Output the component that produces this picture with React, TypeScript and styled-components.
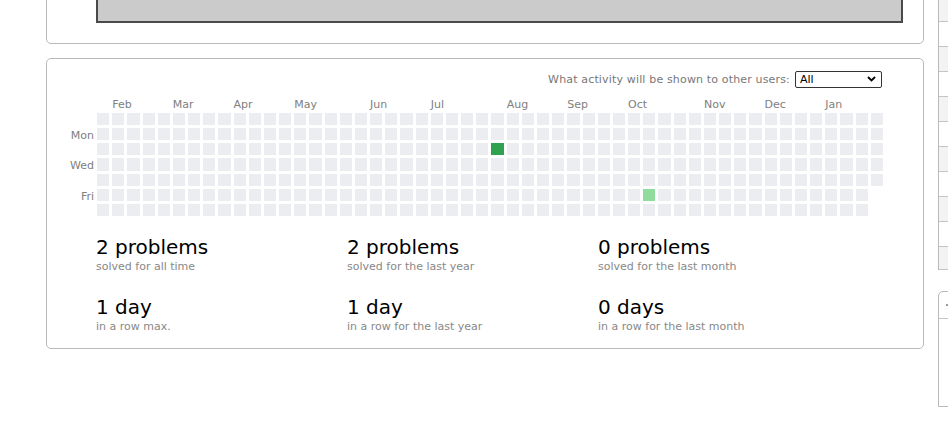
import React from "react";
import styled, { createGlobalStyle } from "styled-components";

const GlobalStyle = createGlobalStyle`
  html, body {
    margin: 0;
    padding: 0;
    background: #ffffff;
    overflow: hidden;
    font-family: "DejaVu Sans", Verdana, sans-serif;
  }
`;

const Page = styled.div`
  display: flex;
  align-items: flex-start;
  gap: 14px;
  padding-left: 46px;
  width: 1200px;
`;

const MainColumn = styled.div`
  width: 878px;
  flex: none;
  display: flex;
  flex-direction: column;
  gap: 14px;
`;

const RoundBox = styled.div`
  border: 1px solid #b9b9b9;
  border-radius: 5px;
  box-sizing: border-box;
`;

const TopBox = styled(RoundBox)`
  margin-top: -40px;
  padding: 19px 20px 20px 49px;
`;

const GrayBlock = styled.div`
  height: 43px;
  box-sizing: border-box;
  background: #cbcbcb;
  border: 2px solid #4a4a4a;
`;

const ActivityBox = styled(RoundBox)`
  padding: 12px 41px 15px 0;
`;

const FilterRow = styled.div`
  display: flex;
  justify-content: flex-end;
  align-items: center;
  gap: 5px;
  font-size: 11px;
  letter-spacing: 0.16px;
  color: #777;
  height: 17px;
`;

const SelectWrap = styled.div`
  position: relative;
  width: 87px;
  height: 17px;
  letter-spacing: 0;
`;

const Select = styled.select`
  appearance: none;
  width: 100%;
  height: 100%;
  box-sizing: border-box;
  border: 1px solid #333;
  border-radius: 2px;
  background: #fff;
  font-family: "DejaVu Sans", Verdana, sans-serif;
  font-size: 11px;
  color: #000;
  padding: 0 0 0 4px;
  margin: 0;
  outline: none;
`;

const Chevron = styled.svg`
  position: absolute;
  right: 6px;
  top: 5px;
  pointer-events: none;
`;

const Heatmap = styled.div`
  display: grid;
  grid-template-columns: 47px 786px;
  column-gap: 3px;
  row-gap: 3px;
  margin-top: 9px;
`;

const MonthRow = styled.div`
  grid-column: 2;
  display: grid;
  grid-template-columns: repeat(52, 1fr);
  column-gap: 3px;
  height: 13px;
  font-size: 11px;
  line-height: 15px;
  color: #808080;
`;

const Month = styled.span<{ $col: number }>`
  grid-column: ${(p) => p.$col} / span 4;
  white-space: nowrap;
`;

const DayLabels = styled.div`
  display: grid;
  grid-template-rows: repeat(7, minmax(0, 1fr));
  row-gap: 3px;
  height: 103px;
  font-size: 11px;
  color: #808080;
  text-align: right;
`;

const DayLabel = styled.span<{ $row: number }>`
  grid-row: ${(p) => p.$row};
  line-height: 16px;
  height: 12px;
  overflow: visible;
`;

const Cells = styled.div`
  display: grid;
  grid-auto-flow: column;
  grid-template-rows: repeat(7, 1fr);
  grid-template-columns: repeat(52, 1fr);
  gap: 3px;
  height: 103px;
`;

const Cell = styled.div<{ $level: number }>`
  background: ${(p) =>
    p.$level === 2 ? "#30a14e" : p.$level === 1 ? "#8fdc9c" : "#ebedf0"};
`;

const Stats = styled.div`
  display: grid;
  grid-template-columns: repeat(3, 251px);
  row-gap: 22px;
  padding-left: 49px;
  margin-top: 19px;
`;

const Stat = styled.div`
  display: flex;
  flex-direction: column;
`;

const StatValue = styled.div`
  font-size: 20px;
  line-height: 24px;
  color: #000;
  white-space: nowrap;
`;

const StatCaption = styled.div`
  margin-top: 1px;
  font-size: 11px;
  line-height: 13px;
  color: #888;
  white-space: nowrap;
`;

const Sidebar = styled.div`
  width: 300px;
  flex: none;
  display: flex;
  flex-direction: column;
  gap: 21px;
`;

const SideTable = styled.div`
  margin-top: -3px;
  border-left: 1px solid #b9b9b9;
  display: flex;
  flex-direction: column;
`;

const SideRow = styled.div<{ $shaded: boolean; $short?: boolean }>`
  height: ${(p) => (p.$short ? "22px" : "24px")};
  border-bottom: 1px solid #c4c4c4;
  background: ${(p) => (p.$shaded ? "#f3f3f3" : "#ffffff")};
`;

const SideBox = styled.div`
  height: 116px;
  box-sizing: border-box;
  border: 1px solid #b9b9b9;
  border-radius: 5px 0 0 0;
`;

const SideBoxHeader = styled.div`
  height: 26px;
  border-bottom: 1px solid #c4c4c4;
  display: flex;
  align-items: center;
  padding-left: 7px;
`;

const months: [string, number][] = [
  ["Feb", 2],
  ["Mar", 6],
  ["Apr", 10],
  ["May", 14],
  ["Jun", 19],
  ["Jul", 23],
  ["Aug", 28],
  ["Sep", 32],
  ["Oct", 36],
  ["Nov", 41],
  ["Dec", 45],
  ["Jan", 49],
];

const stats: [string, string][] = [
  ["2 problems", "solved for all time"],
  ["2 problems", "solved for the last year"],
  ["0 problems", "solved for the last month"],
  ["1 day", "in a row max."],
  ["1 day", "in a row for the last year"],
  ["0 days", "in a row for the last month"],
];

const cellCount = 52 * 7 - 2;
const levels: Record<number, number> = { [26 * 7 + 2]: 2, [36 * 7 + 5]: 1 };

export default function App() {
  return (
    <>
      <GlobalStyle />
      <Page>
        <MainColumn>
          <TopBox>
            <GrayBlock />
          </TopBox>
          <ActivityBox>
            <FilterRow>
              <span>What activity will be shown to other users:</span>
              <SelectWrap>
                <Select defaultValue="all">
                  <option value="all">All</option>
                  <option value="solutions">Solutions</option>
                </Select>
                <Chevron width="9" height="6" viewBox="0 0 9 6">
                  <path
                    d="M1 1 L4.5 4.5 L8 1"
                    fill="none"
                    stroke="#000"
                    strokeWidth="1.8"
                  />
                </Chevron>
              </SelectWrap>
            </FilterRow>
            <Heatmap>
              <MonthRow>
                {months.map(([m, c]) => (
                  <Month key={m} $col={c}>
                    {m}
                  </Month>
                ))}
              </MonthRow>
              <DayLabels>
                <DayLabel $row={2}>Mon</DayLabel>
                <DayLabel $row={4}>Wed</DayLabel>
                <DayLabel $row={6}>Fri</DayLabel>
              </DayLabels>
              <Cells>
                {Array.from({ length: cellCount }, (_, i) => (
                  <Cell key={i} $level={levels[i] ?? 0} />
                ))}
              </Cells>
            </Heatmap>
            <Stats>
              {stats.map(([v, c], i) => (
                <Stat key={i}>
                  <StatValue>{v}</StatValue>
                  <StatCaption>{c}</StatCaption>
                </Stat>
              ))}
            </Stats>
          </ActivityBox>
        </MainColumn>
        <Sidebar>
          <SideTable>
            {Array.from({ length: 11 }, (_, i) => (
              <SideRow key={i} $shaded={i % 2 === 0} $short={i === 10} />
            ))}
          </SideTable>
          <SideBox>
            <SideBoxHeader>
              <svg width="10" height="6" viewBox="0 0 10 6">
                <path d="M0 3 H9 M6 0.5 L9 3 L6 5.5" fill="none" stroke="#333" strokeWidth="1" />
              </svg>
            </SideBoxHeader>
          </SideBox>
        </Sidebar>
      </Page>
    </>
  );
}
